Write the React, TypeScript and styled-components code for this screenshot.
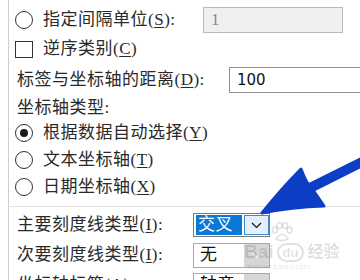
import React from 'react';
import styled, { createGlobalStyle } from 'styled-components';

const GlobalStyle = createGlobalStyle`
  html, body {
    margin: 0;
    padding: 0;
    background: #fff;
    overflow: hidden;
  }
`;

const Page = styled.div`
  position: relative;
  width: 360px;
  height: 280px;
  overflow: hidden;
  background: #fff;
  font-family: 'Liberation Serif', 'Noto Sans CJK SC', serif;
  font-size: 17px;
  letter-spacing: 0.5px;
  color: #2a2a2a;
`;

const Frame = styled.div`
  margin-left: 8px;
  height: 100%;
  border-left: 1px solid #cfcfcf;
  padding: 6px 0 0 6px;
  display: flex;
  flex-direction: column;
`;

const Row = styled.div<{ $h: number; $gap?: number; $indent?: number }>`
  display: flex;
  align-items: center;
  flex-shrink: 0;
  height: ${(p) => p.$h}px;
  margin-top: ${(p) => p.$gap ?? 0}px;
  padding-left: ${(p) => p.$indent ?? 0}px;
  white-space: nowrap;
`;

const Label = styled.span<{ $w?: number }>`
  display: inline-block;
  line-height: 20px;
  width: ${(p) => (p.$w ? `${p.$w}px` : 'auto')};
  flex-shrink: 0;
`;

const Key = styled.u`
  text-decoration-thickness: 1px;
  text-underline-offset: 2px;
`;

const Radio = styled.span<{ $checked?: boolean }>`
  position: relative;
  box-sizing: border-box;
  width: 18px;
  height: 18px;
  margin-right: 10px;
  border: 1px solid #333;
  border-radius: 50%;
  background: #fff;
  flex-shrink: 0;

  &::after {
    content: '';
    display: ${(p) => (p.$checked ? 'block' : 'none')};
    position: absolute;
    left: 4px;
    top: 4px;
    width: 8px;
    height: 8px;
    border-radius: 50%;
    background: #1a1a1a;
  }
`;

const Checkbox = styled.span`
  box-sizing: border-box;
  width: 18px;
  height: 17px;
  margin-right: 10px;
  border: 1px solid #333;
  background: #fff;
  flex-shrink: 0;
`;

const TextBox = styled.div<{ $disabled?: boolean; $w: number }>`
  box-sizing: border-box;
  width: ${(p) => p.$w}px;
  height: 26px;
  flex-shrink: 0;
  padding-left: 7px;
  display: flex;
  align-items: center;
  border: 1px solid ${(p) => (p.$disabled ? '#b9b9b9' : '#8f8f8f')};
  background: ${(p) => (p.$disabled ? '#f0f0f0' : '#fff')};
  color: ${(p) => (p.$disabled ? '#8a8a8a' : '#111')};
  font-family: ${(p) =>
    p.$disabled ? "'Liberation Serif', serif" : "'DejaVu Sans', sans-serif"};
  font-size: ${(p) => (p.$disabled ? 17 : 15)}px;
  letter-spacing: 0;
`;

const Separator = styled.div`
  flex-shrink: 0;
  height: 1px;
  margin: 6px 0 0 -5px;
  background: #e2e2e2;
`;

const Combo = styled.div<{ $h: number; $active?: boolean }>`
  box-sizing: border-box;
  width: 77px;
  height: ${(p) => p.$h}px;
  flex-shrink: 0;
  display: flex;
  align-items: stretch;
  padding: ${(p) => (p.$active ? '1px 0 1px 2px' : '0')};
  border: 1px solid ${(p) => (p.$active ? '#7a7a7a' : '#a9a9a9')};
  background: #fff;
`;

const ComboValue = styled.span<{ $selected?: boolean }>`
  flex: 1;
  display: flex;
  align-items: center;
  padding-left: ${(p) => (p.$selected ? 2 : 6)}px;
  margin-right: 2px;
  background: ${(p) => (p.$selected ? '#0a78d6' : 'transparent')};
  color: ${(p) => (p.$selected ? '#fff' : '#111')};
  line-height: 20px;
`;

const ComboButton = styled.span<{ $active?: boolean }>`
  box-sizing: border-box;
  width: 25px;
  display: flex;
  align-items: center;
  justify-content: center;
  background: ${(p) => (p.$active ? '#e3effa' : '#d6d6d6')};
  border: 1px solid ${(p) => (p.$active ? '#3d8ad0' : '#d6d6d6')};
  color: ${(p) => (p.$active ? '#111' : '#f4f4f4')};
`;

const Watermark = styled.div`
  position: absolute;
  left: 244px;
  top: 222px;
  width: 110px;
  pointer-events: none;
  white-space: nowrap;
  color: rgba(0, 0, 0, 0.12);
  font-family: 'Liberation Sans', 'Noto Sans CJK SC', sans-serif;
  letter-spacing: 0;
`;

const MarkLine = styled.div`
  display: flex;
  align-items: center;
  gap: 3px;
  font-size: 19px;
  font-weight: 700;
  line-height: 20px;
`;

const MarkCjk = styled.span`
  font-size: 16px;
  font-weight: 700;
  color: rgba(0, 0, 0, 0.14);
`;

const MarkDu = styled.span`
  border: 2px solid rgba(0, 0, 0, 0.12);
  border-radius: 10px;
  padding: 0 4px;
  font-size: 13px;
  line-height: 15px;
`;

const MarkUrl = styled.div`
  font-size: 8px;
  line-height: 9px;
  padding-left: 2px;
`;

const Overlay = styled.svg`
  position: absolute;
  left: 0;
  top: 0;
  pointer-events: none;
`;

const Chevron = () => (
  <svg width="11" height="7" viewBox="0 0 11 7">
    <polyline points="1,1 5.5,5.5 10,1" fill="none" stroke="currentColor" strokeWidth="1.2" />
  </svg>
);

const Paw = () => (
  <svg width="24" height="20" viewBox="0 0 24 20" style={{ marginLeft: 26, display: 'block' }}>
    <g fill="none" stroke="rgba(0,0,0,0.12)" strokeWidth="1.5">
      <ellipse cx="5" cy="8" rx="2.5" ry="3" />
      <ellipse cx="9.5" cy="3.5" rx="2.5" ry="3" />
      <ellipse cx="15" cy="3.5" rx="2.5" ry="3" />
      <ellipse cx="19.5" cy="8" rx="2.5" ry="3" />
      <path d="M6,17 Q12,8 18,17 Q12,20 6,17 Z" />
    </g>
  </svg>
);

export default function App() {
  return (
    <>
      <GlobalStyle />
      <Page>
        <Frame>
          <Row $h={28}>
            <Radio />
            <Label $w={160}>
              指定间隔单位(<Key>S</Key>):
            </Label>
            <TextBox $disabled $w={140}>
              1
            </TextBox>
          </Row>
          <Row $h={30}>
            <Checkbox />
            <Label>
              逆序类别(<Key>C</Key>)
            </Label>
          </Row>
          <Row $h={32} $indent={2}>
            <Label $w={212}>
              标签与坐标轴的距离(<Key>D</Key>):
            </Label>
            <TextBox $w={150}>100</TextBox>
          </Row>
          <Row $h={24} $indent={2}>
            <Label>坐标轴类型:</Label>
          </Row>
          <Row $h={26}>
            <Radio $checked />
            <Label>
              根据数据自动选择(<Key>Y</Key>)
            </Label>
          </Row>
          <Row $h={28}>
            <Radio />
            <Label>
              文本坐标轴(<Key>T</Key>)
            </Label>
          </Row>
          <Row $h={26}>
            <Radio />
            <Label>
              日期坐标轴(<Key>X</Key>)
            </Label>
          </Row>

          <Separator />

          <Row $h={26} $gap={5} $indent={2}>
            <Label $w={176}>
              主要刻度线类型(<Key>I</Key>):
            </Label>
            <Combo $h={24} $active>
              <ComboValue $selected>交叉</ComboValue>
              <ComboButton $active>
                <Chevron />
              </ComboButton>
            </Combo>
          </Row>
          <Row $h={28} $gap={3} $indent={2}>
            <Label $w={176}>
              次要刻度线类型(<Key>I</Key>):
            </Label>
            <Combo $h={25}>
              <ComboValue>无</ComboValue>
              <ComboButton>
                <Chevron />
              </ComboButton>
            </Combo>
          </Row>
          <Row $h={28} $gap={2} $indent={2}>
            <Label $w={176}>
              坐标轴标签(<Key>A</Key>):
            </Label>
            <Combo $h={25}>
              <ComboValue>轴旁</ComboValue>
              <ComboButton>
                <Chevron />
              </ComboButton>
            </Combo>
          </Row>
        </Frame>

        <Watermark>
          <Paw />
          <MarkLine>
            <span>Bai</span>
            <MarkDu>du</MarkDu>
            <MarkCjk>经验</MarkCjk>
          </MarkLine>
          <MarkUrl>jingyan.baidu.com</MarkUrl>
        </Watermark>

        <Overlay width="360" height="280" viewBox="0 0 360 280">
          <line x1="310" y1="188" x2="372" y2="157" stroke="#0d3fc6" strokeWidth="10" />
          <path
            d="M262,213 Q282,188 301,169 Q307,185 313,190 Q318,197 324,206 Q292,207 262,213 Z"
            fill="#0d3fc6"
            stroke="#0d3fc6"
            strokeWidth="3"
            strokeLinejoin="round"
          />
        </Overlay>
      </Page>
    </>
  );
}
